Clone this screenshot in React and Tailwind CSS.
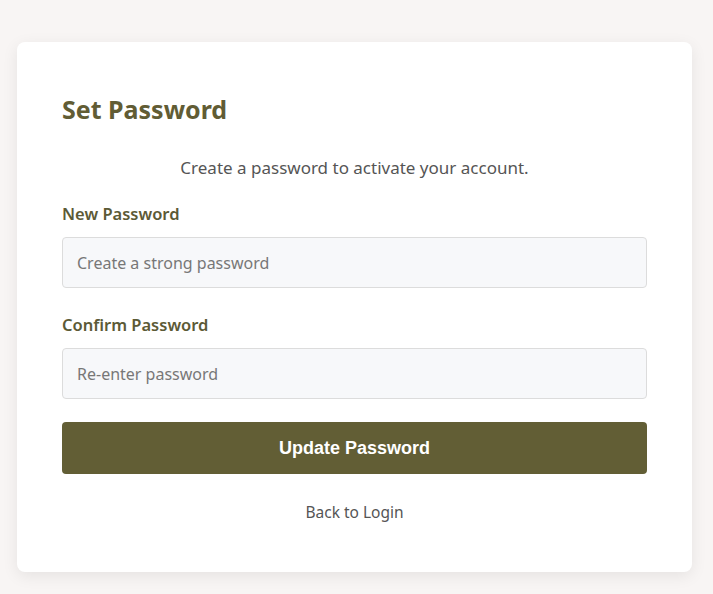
export default function App() {
  const font = { fontFamily: '"Noto Sans", "Open Sans", sans-serif' };
  return (
    <div className="min-h-[594px] bg-[#f8f5f4] pt-[42px] pb-[23px]" style={font}>
      <div className="ml-[17px] w-[675px] rounded-[8px] bg-white px-[45px] pt-[49px] pb-[48px] shadow-[0_4px_16px_rgba(0,0,0,0.08)]">
        <h1 className="text-[25px] font-bold leading-[36px] text-[#615c34]">Set Password</h1>
        <p className="mt-[29px] text-center text-[17px] leading-[24px] text-[#555555]">
          Create a password to activate your account.
        </p>
        <label className="mt-[22px] block text-[16.5px] font-semibold leading-[24px] text-[#5c5a36]">New Password</label>
        <input
          type="password"
          placeholder="Create a strong password"
          className="mt-[11px] block h-[51px] w-full rounded-[4px] border border-[#dcdcdc] bg-[#f7f8fa] px-[14px] text-[16px] text-[#555] placeholder:text-[#777]"
        />
        <label className="mt-[25px] block text-[16.5px] font-semibold leading-[24px] text-[#5c5a36]">Confirm Password</label>
        <input
          type="password"
          placeholder="Re-enter password"
          className="mt-[11px] block h-[51px] w-full rounded-[4px] border border-[#dcdcdc] bg-[#f7f8fa] px-[14px] text-[16px] text-[#555] placeholder:text-[#777]"
        />
        <button
          className="mt-[23px] block h-[52px] w-full rounded-[4px] bg-[#625e35] text-[18px] font-bold text-white"
          style={{ fontFamily: '"Liberation Sans", Arial, sans-serif' }}
        >
          Update Password
        </button>
        <div className="mt-[26px] text-center text-[15.5px] leading-[24px] text-[#555]">Back to Login</div>
      </div>
    </div>
  );
}
